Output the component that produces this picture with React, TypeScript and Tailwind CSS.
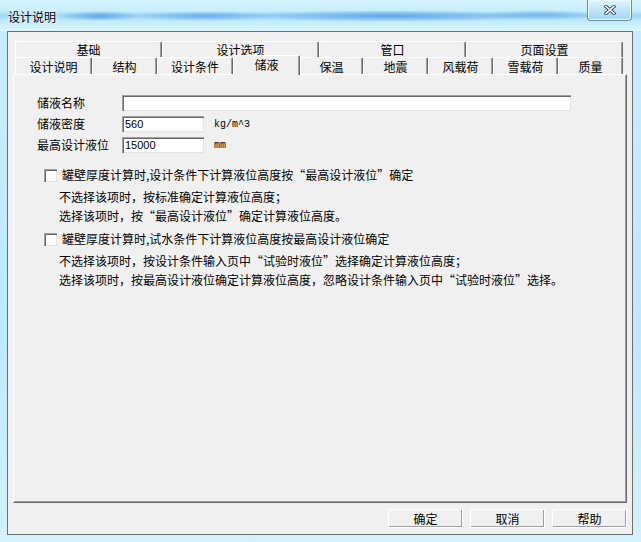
const cjk = "font-['Noto_Sans_CJK_SC','Liberation_Sans',sans-serif]"

type Tab = { label: string; w: string; selected?: boolean }

const topRow: Tab[] = [
    { label: "基础", w: "w-[147px]" },
    { label: "设计选项", w: "w-[157px]" },
    { label: "管口", w: "w-[147px]" },
    { label: "页面设置", w: "w-[157px]" },
]

const bottomRow: Tab[] = [
    { label: "设计说明", w: "w-[77px]" },
    { label: "结构", w: "w-[65px]" },
    { label: "设计条件", w: "w-[76px]" },
    { label: "储液", w: "w-[67px]", selected: true },
    { label: "保温", w: "w-[63px]" },
    { label: "地震", w: "w-[65px]" },
    { label: "风载荷", w: "w-[65px]" },
    { label: "雪载荷", w: "w-[65px]" },
    { label: "质量", w: "w-[65px]" },
]

const sunken =
    "bg-white border-t border-l border-[#a0a0a0] border-b-white border-r-white shadow-[inset_1px_1px_0_#696969,inset_-1px_-1px_0_#e3e3e3]"

function TabButton({ tab, tall }: { tab: Tab; tall?: boolean }) {
    if (tab.selected) {
        return (
            <div
                className={`${tab.w} relative z-10 -mt-[2px] h-[20px] flex justify-center pt-[2px] leading-[14px] bg-[#f0f0f0] border-t border-l border-white border-r border-r-[#696969] shadow-[inset_-1px_0_0_#a0a0a0] rounded-t-[2px]`}
            >
                {tab.label}
            </div>
        )
    }
    return (
        <div
            className={`${tab.w} ${tall ? "h-[17px] pt-[2px]" : "h-[16px]"} flex items-center justify-center leading-[14px] border-t border-l border-white border-r border-r-[#696969] shadow-[inset_-1px_0_0_#a0a0a0] rounded-t-[2px]`}
        >
            {tab.label}
        </div>
    )
}

function CheckOption({ title, lines }: { title: string; lines: string[] }) {
    return (
        <div>
            <div className="flex items-center h-[18px] pl-[30px] gap-[5px]">
                <div className={`w-[13px] h-[13px] ${sunken}`} />
                <span className="leading-[14px] whitespace-nowrap">{title}</span>
            </div>
            <div className="mt-[3px] pl-[45px] leading-[19px] whitespace-nowrap">
                {lines.map((l) => (
                    <div key={l}>{l}</div>
                ))}
            </div>
        </div>
    )
}

function Button({ label }: { label: string }) {
    return (
        <div className="w-[75px] h-[19px] flex items-center justify-center leading-[14px] bg-[#f0f0f0] border-t border-l border-white border-b border-r border-[#696969] border-t-white border-l-white shadow-[inset_-1px_-1px_0_#a0a0a0]">
            {label}
        </div>
    )
}

export default function App() {
    return (
        <div
            className={`w-[641px] h-[542px] flex flex-col overflow-hidden text-[12px] text-black ${cjk} bg-[linear-gradient(to_bottom,#c9eefb,#bfe9f9_60%,#d2f2fc)]`}
        >
            {/* title bar */}
            <div className="h-[31px] flex items-start bg-[radial-gradient(ellipse_40px_5px_at_100px_16px,#5ea7ea,transparent),radial-gradient(ellipse_70px_5px_at_205px_16px,#6aaeed,transparent),radial-gradient(ellipse_150px_6px_at_390px_16px,#5fa8eb,transparent),radial-gradient(ellipse_60px_5px_at_540px_15px,#74b6ee,transparent),linear-gradient(to_bottom,#d4f4fd,#c6eefc_35%,#9fd4f5_50%,#c4ecfb_70%,#d8f6fd)]">
                <div className="ml-[8px] mt-[10px] leading-[14px] [text-shadow:0_0_6px_#ffffff,0_0_3px_#ffffff]">
                    设计说明
                </div>
                <div className="ml-auto mr-[9px] w-[45px] h-[21px] flex items-center justify-center rounded-b-[4px] border border-t-0 border-[#6f8aa3] bg-[linear-gradient(to_bottom,#e2f6fd,#bfe4f7_50%,#a6d6f2)] shadow-[inset_0_0_0_1px_#e8f8ff]">
                    <svg width="12" height="10" viewBox="0 0 12 10">
                        <path d="M2 1.5 L10 8.5 M10 1.5 L2 8.5" stroke="#34465a" strokeWidth="3.4" strokeLinecap="square" />
                        <path d="M2 1.5 L10 8.5 M10 1.5 L2 8.5" stroke="#ffffff" strokeWidth="1.6" strokeLinecap="square" />
                    </svg>
                </div>
            </div>

            {/* client area */}
            <div className="ml-[7px] w-[626px] h-[504px] bg-[#f0f0f0] border border-[#6e6e6e] px-[5px] pt-[9px]">
                <div className="mx-[2px] flex items-start">
                    {topRow.map((t) => (
                        <TabButton key={t.label} tab={t} />
                    ))}
                </div>
                <div className="mx-[2px] h-[17px] flex items-start">
                    {bottomRow.map((t) => (
                        <TabButton key={t.label} tab={t} tall />
                    ))}
                </div>

                <div className="h-[429px] border-t border-l border-white border-r border-b border-r-[#696969] border-b-[#696969] shadow-[inset_-1px_-1px_0_#a0a0a0] pt-[20px]">
                    <div className="flex flex-col gap-[5px] pl-[23px]">
                        <div className="flex items-center h-[16px]">
                            <span className="w-[85px] leading-[14px]">储液名称</span>
                            <div className={`w-[449px] h-[16px] ${sunken}`} />
                        </div>
                        <div className="flex items-center h-[16px]">
                            <span className="w-[85px] leading-[14px]">储液密度</span>
                            <div className={`w-[82px] h-[16px] ${sunken} pl-[2px] flex items-center font-['Liberation_Sans',sans-serif] text-[11px]`}>
                                560
                            </div>
                            <span className="ml-[10px] font-['Liberation_Mono',monospace] text-[10px]">kg/m^3</span>
                        </div>
                        <div className="flex items-center h-[16px]">
                            <span className="w-[85px] leading-[14px] whitespace-nowrap">最高设计液位</span>
                            <div className={`w-[82px] h-[16px] ${sunken} pl-[2px] flex items-center font-['Liberation_Sans',sans-serif] text-[11px]`}>
                                15000
                            </div>
                            <span className="ml-[10px] font-['Liberation_Mono',monospace] text-[10px]">mm</span>
                        </div>
                    </div>

                    <div className="mt-[13px]">
                        <CheckOption
                            title="罐壁厚度计算时,设计条件下计算液位高度按“最高设计液位”确定"
                            lines={["不选择该项时，按标准确定计算液位高度；", "选择该项时，按“最高设计液位”确定计算液位高度。"]}
                        />
                        <div className="mt-[5px]">
                            <CheckOption
                                title="罐壁厚度计算时,试水条件下计算液位高度按最高设计液位确定"
                                lines={[
                                    "不选择该项时，按设计条件输入页中“试验时液位”选择确定计算液位高度；",
                                    "选择该项时，按最高设计液位确定计算液位高度，忽略设计条件输入页中“试验时液位”选择。",
                                ]}
                            />
                        </div>
                    </div>
                </div>

                <div className="mt-[6px] flex justify-end gap-[7px]">
                    <Button label="确定" />
                    <Button label="取消" />
                    <Button label="帮助" />
                </div>
            </div>
        </div>
    )
}
